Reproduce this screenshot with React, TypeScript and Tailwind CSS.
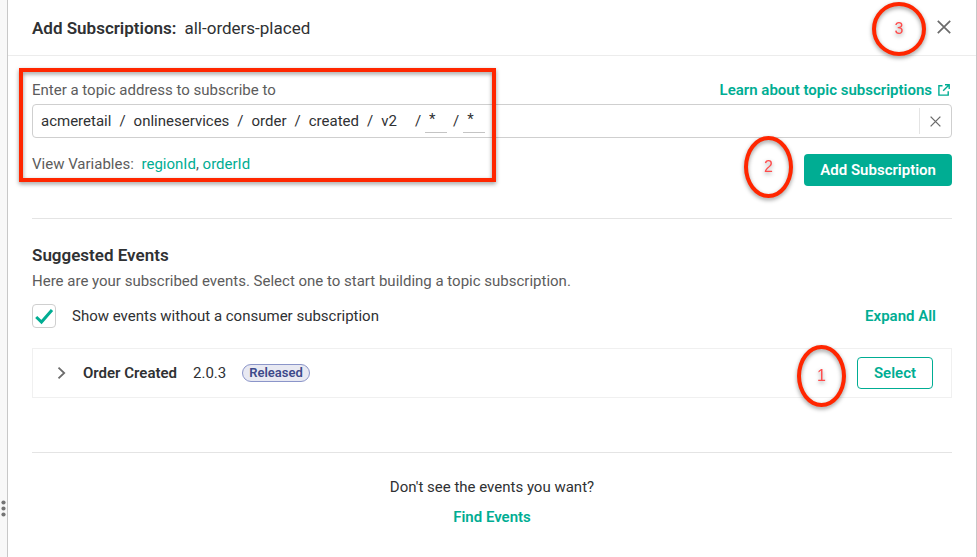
import { useState } from "react";
import type { ReactNode } from "react";

const pathLevels = ["acmeretail", "onlineservices", "order", "created"];

function CloseIcon({ size }: { size: number }) {
  return (
    <svg width={size} height={size} viewBox="0 0 14 14" fill="none" stroke="#6b6b6b" strokeWidth="1.7" aria-hidden="true">
      <path d="M0.8 0.8 13.2 13.2M13.2 0.8 0.8 13.2" />
    </svg>
  );
}

function ExternalIcon() {
  return (
    <svg width="12" height="12" viewBox="0 0 12 12" fill="none" stroke="currentColor" strokeWidth="1.4" aria-hidden="true">
      <path d="M4.5 1.7H0.9V11.1H10.2V7.2M7 0.8H11.2V5M11 1 5.2 6.8" />
    </svg>
  );
}

function Callout({ children, className }: { children: ReactNode; className: string }) {
  return (
    <span
      className={`pointer-events-none absolute flex items-center justify-center rounded-[50%] border-4 border-[#ff2600] font-['Liberation_Sans',sans-serif] text-base text-[#ff4b4b] drop-shadow-[0_2px_2px_rgba(0,0,0,0.4)] ${className}`}
    >
      {children}
    </span>
  );
}

function VariableLevel({ name }: { name: string }) {
  return (
    <input
      aria-label={name}
      defaultValue="*"
      className="h-6 w-[22px] border-b border-[#c4c4c4] bg-transparent px-1 pb-1 outline-none"
    />
  );
}

export default function App() {
  const [checked, setChecked] = useState(true);

  return (
    <div className="flex min-h-screen bg-white font-[Roboto,'Noto_Sans',sans-serif] text-[15px] leading-5 text-[#2f3133]">
      <div className="relative w-2 shrink-0 border-r border-[#c8c8c8] bg-[#f8f8f8]">
        <svg className="absolute bottom-10 left-[1px]" width="5" height="17" viewBox="0 0 5 17" fill="#757575" aria-hidden="true">
          <circle cx="2.5" cy="2.5" r="2.1" />
          <circle cx="2.5" cy="8.5" r="2.1" />
          <circle cx="2.5" cy="14.5" r="2.1" />
        </svg>
      </div>

      <div className="min-w-0 flex-1 border-r border-[#c8c8c8]">
        <header className="relative flex h-14 items-center justify-between border-b border-[#ececec] px-6">
          <h1 className="flex gap-2 text-[17px]">
            <span className="font-semibold">Add Subscriptions:</span>
            <span>all-orders-placed</span>
          </h1>
          <button type="button" aria-label="Close" className="pr-[1px] pb-[2px]">
            <CloseIcon size={14} />
          </button>
          <Callout className="top-[2px] right-[50px] h-[54px] w-[54px]">3</Callout>
        </header>

        <main className="px-6">
          <section className="relative border-b border-[#e4e4e4] pt-6 pb-8">
            <div className="flex items-center justify-between">
              <span id="topic-label" className="text-[#5c5c5c]">
                Enter a topic address to subscribe to
              </span>
              <a href="#learn" className="flex items-center gap-[6px] pr-[2px] font-semibold text-[#00ad93]">
                Learn about topic subscriptions
                <ExternalIcon />
              </a>
            </div>

            <div
              role="group"
              aria-labelledby="topic-label"
              className="mt-1 flex h-[34px] items-center rounded border border-[#cfcfcf] pl-2"
            >
              <div className="flex flex-1 items-center">
                {pathLevels.map((level) => (
                  <span key={level} className="flex gap-2 pr-2">
                    <span>{level}</span>
                    <span>/</span>
                  </span>
                ))}
                <span>v2</span>
                <span className="pr-1 pl-[18px]">/</span>
                <VariableLevel name="regionId" />
                <span className="pr-1 pl-[6px]">/</span>
                <VariableLevel name="orderId" />
              </div>
              <button
                type="button"
                aria-label="Clear topic"
                className="flex h-[26px] w-8 items-center justify-center border-l border-[#e4e4e4]"
              >
                <CloseIcon size={11} />
              </button>
            </div>

            <div className="mt-4 flex items-start justify-between">
              <p className="text-[#5c5c5c]">
                <span className="pr-1">View Variables:</span>{" "}
                <a href="#regionId" className="text-[#00ad93]">regionId</a>
                {", "}
                <a href="#orderId" className="text-[#00ad93]">orderId</a>
              </p>
              <button type="button" className="h-8 rounded bg-[#00ad93] px-4 font-semibold text-white">
                Add Subscription
              </button>
            </div>

            <div className="pointer-events-none absolute top-3 -left-[13px] h-[114px] w-[477px] border-4 border-[#ff2600] drop-shadow-[0_2px_2px_rgba(0,0,0,0.4)]" />
            <Callout className="right-[159px] bottom-5 h-[62px] w-[49px]">2</Callout>
          </section>

          <section className="border-b border-[#e4e4e4] pt-[26px] pb-[54px]">
            <h2 className="text-[17px] leading-5 font-semibold">Suggested Events</h2>
            <p className="mt-[6px] text-[#5c5c5c]">
              Here are your subscribed events. Select one to start building a topic subscription.
            </p>

            <div className="mt-[13px] flex items-center justify-between pr-4">
              <label className="flex items-center gap-4">
                <span className="relative flex h-6 w-6">
                  <input
                    type="checkbox"
                    checked={checked}
                    onChange={(event) => setChecked(event.target.checked)}
                    className="h-6 w-6 appearance-none rounded border border-[#cfcfcf] bg-white"
                  />
                  {checked && (
                    <svg className="pointer-events-none absolute inset-0" width="24" height="24" viewBox="0 0 24 24" fill="none" stroke="#00ad93" strokeWidth="3" aria-hidden="true">
                      <path d="M4.2 13 9.5 18 20 6" />
                    </svg>
                  )}
                </span>
                Show events without a consumer subscription
              </label>
              <button type="button" className="font-semibold text-[#00ad93]">
                Expand All
              </button>
            </div>

            <div className="relative mt-5 flex h-[50px] items-center border border-[#f0f0f0] pr-[18px] pl-6">
              <button type="button" aria-label="Expand Order Created" className="flex w-[26px] shrink-0">
                <svg width="9" height="14" viewBox="0 0 9 14" fill="none" stroke="#6b6b6b" strokeWidth="1.8" aria-hidden="true">
                  <path d="M1.5 1.6 7.2 7 1.5 12.4" />
                </svg>
              </button>
              <span className="font-semibold">Order Created</span>
              <span className="pl-4">2.0.3</span>
              <span className="ml-4 rounded-full border border-[#8b95c9] bg-[#e8e9f2] px-[6px] text-[13px] leading-4 font-semibold text-[#3d4a8a]">
                Released
              </span>
              <button
                type="button"
                className="ml-auto h-8 rounded border border-[#00ad93] px-4 font-semibold text-[#00ad93]"
              >
                Select
              </button>
              <Callout className="-top-1 right-[105px] h-[62px] w-[49px]">1</Callout>
            </div>
          </section>

          <section className="flex flex-col items-center gap-[10px] py-6">
            <p>Don't see the events you want?</p>
            <a href="#find" className="font-semibold text-[#00ad93]">
              Find Events
            </a>
          </section>
        </main>
      </div>
    </div>
  );
}
